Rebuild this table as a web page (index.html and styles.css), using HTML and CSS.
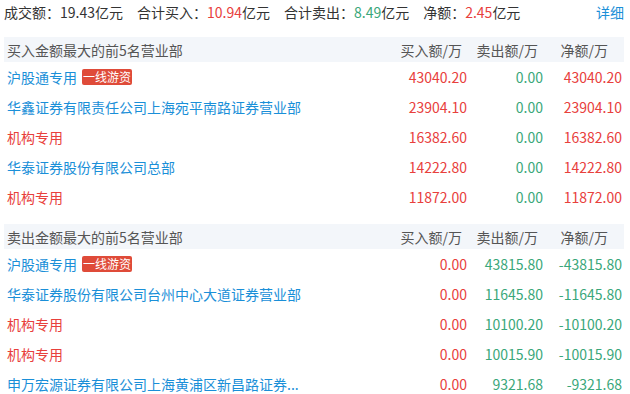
FILE: index.html
```html
<!DOCTYPE html>
<html lang="zh-CN">
<head>
<meta charset="utf-8">
<link rel="stylesheet" href="styles.css">
</head>
<body>
<div class="page">
  <div class="summary">
    <span class="item">成交额：19.43亿元</span>
    <span class="item">合计买入：<span class="red">10.94</span>亿元</span>
    <span class="item">合计卖出：<span class="green">8.49</span>亿元</span>
    <span class="item">净额：<span class="red">2.45</span>亿元</span>
    <a class="detail">详细</a>
  </div>

  <div class="table">
    <div class="head">
      <div class="name">买入金额最大的前5名营业部</div>
      <div class="num h1">买入额/万</div>
      <div class="num h2">卖出额/万</div>
      <div class="num h3">净额/万</div>
    </div>
    <div class="row">
      <div class="name blue">沪股通专用<span class="badge">一线游资</span></div>
      <div class="num red">43040.20</div>
      <div class="num green">0.00</div>
      <div class="num red">43040.20</div>
    </div>
    <div class="row">
      <div class="name blue">华鑫证券有限责任公司上海宛平南路证券营业部</div>
      <div class="num red">23904.10</div>
      <div class="num green">0.00</div>
      <div class="num red">23904.10</div>
    </div>
    <div class="row">
      <div class="name red">机构专用</div>
      <div class="num red">16382.60</div>
      <div class="num green">0.00</div>
      <div class="num red">16382.60</div>
    </div>
    <div class="row">
      <div class="name blue">华泰证券股份有限公司总部</div>
      <div class="num red">14222.80</div>
      <div class="num green">0.00</div>
      <div class="num red">14222.80</div>
    </div>
    <div class="row">
      <div class="name red">机构专用</div>
      <div class="num red">11872.00</div>
      <div class="num green">0.00</div>
      <div class="num red">11872.00</div>
    </div>
  </div>

  <div class="table second">
    <div class="head">
      <div class="name">卖出金额最大的前5名营业部</div>
      <div class="num h1">买入额/万</div>
      <div class="num h2">卖出额/万</div>
      <div class="num h3">净额/万</div>
    </div>
    <div class="row">
      <div class="name blue">沪股通专用<span class="badge">一线游资</span></div>
      <div class="num red">0.00</div>
      <div class="num green">43815.80</div>
      <div class="num green">-43815.80</div>
    </div>
    <div class="row">
      <div class="name blue">华泰证券股份有限公司台州中心大道证券营业部</div>
      <div class="num red">0.00</div>
      <div class="num green">11645.80</div>
      <div class="num green">-11645.80</div>
    </div>
    <div class="row">
      <div class="name red">机构专用</div>
      <div class="num red">0.00</div>
      <div class="num green">10100.20</div>
      <div class="num green">-10100.20</div>
    </div>
    <div class="row">
      <div class="name red">机构专用</div>
      <div class="num red">0.00</div>
      <div class="num green">10015.90</div>
      <div class="num green">-10015.90</div>
    </div>
    <div class="row">
      <div class="name blue ellipsis">申万宏源证券有限公司上海黄浦区新昌路证券...</div>
      <div class="num red">0.00</div>
      <div class="num green">9321.68</div>
      <div class="num green">-9321.68</div>
    </div>
  </div>
</div>
</body>
</html>
```

FILE: styles.css
```css
* { box-sizing: border-box; }
html, body { margin: 0; padding: 0; background: #fff; }
body {
  font-family: "Noto Sans CJK SC", "Noto Sans", sans-serif;
  font-size: 14px;
  color: #333;
  width: 630px;
  height: 394px;
  overflow: hidden;
}
.page { padding: 0 6px 0 4px; }
.summary {
  display: flex;
  align-items: center;
  height: 24px;
  line-height: 24px;
  margin-bottom: 13px;
  font-size: 14px;
}
.summary .item { margin-right: 14px; white-space: nowrap; }
.detail { margin-left: auto; color: #1a8fd8; cursor: pointer; }
.red { color: #e8403c; }
.green { color: #3aa77a; }
.blue { color: #1a8fd8; }
.table { display: flex; flex-direction: column; }
.table.second { margin-top: 12px; }
.head, .row {
  display: grid;
  grid-template-columns: 1fr 76px 76px 79px;
  align-items: center;
  padding: 0 2px 0 3px;
  white-space: nowrap;
}
.head {
  height: 25px;
  background: #f3f6fa;
  color: #555;
}
.row { height: 30px; }
.num { text-align: right; }
.head .h1, .head .h2 { padding-right: 5px; }
.head .h3 { padding-right: 14px; }
.name { display: flex; align-items: center; }
.badge {
  display: inline-block;
  margin-left: 5px;
  background: #df4b39;
  color: #fff;
  font-size: 12px;
  line-height: 16px;
  height: 16px;
  padding: 0 1px;
  border-radius: 2px;
}
```
